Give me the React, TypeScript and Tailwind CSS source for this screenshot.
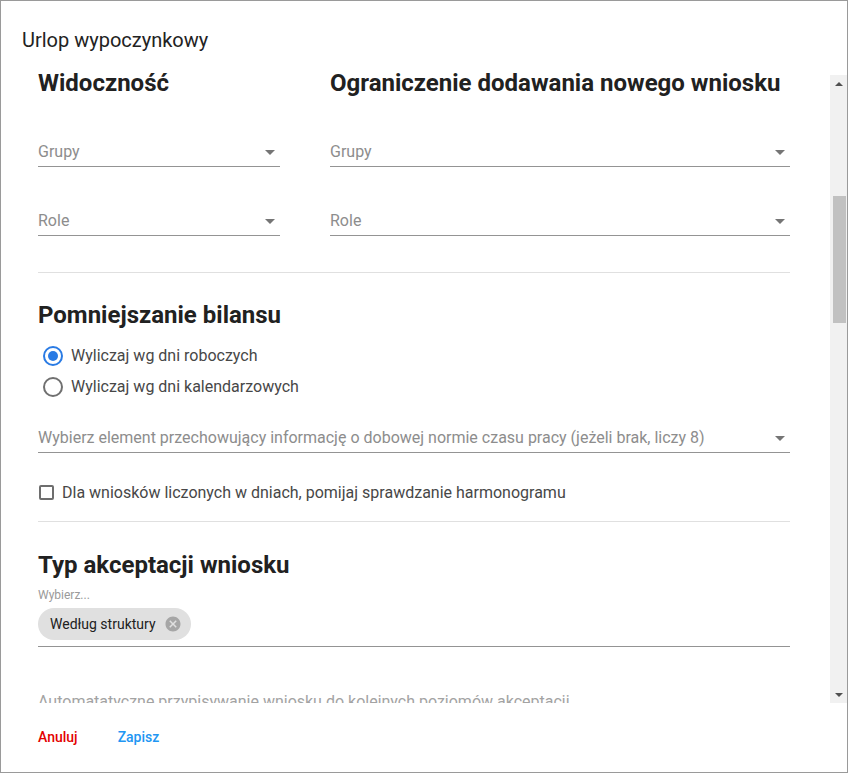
import type { ReactNode } from 'react';

const ArrowDrop = () => (
  <svg viewBox="0 0 24 24" className="w-6 h-6 -mr-[2px] shrink-0 fill-[#757575]">
    <path d="M7 10l5 5 5-5z" />
  </svg>
);

function SelectField({ placeholder, className = '' }: { placeholder: string; className?: string }) {
  return (
    <div className={`flex items-center h-[19px] box-content pb-[5px] border-b border-[#949494] ${className}`}>
      <span className="flex-1 text-[16px] leading-[19px] text-[#8d8d8d] truncate">{placeholder}</span>
      <ArrowDrop />
    </div>
  );
}

function Heading({ children, className = '' }: { children: ReactNode; className?: string }) {
  return <h2 className={`text-[24px] leading-[28px] font-bold text-[#212121] ${className}`}>{children}</h2>;
}

function Radio({ checked, label }: { checked?: boolean; label: string }) {
  return (
    <label className="flex items-center h-[31px]">
      <svg viewBox="0 0 24 24" className="w-6 h-6 ml-[3px]">
        <circle cx="12" cy="12" r="9" fill="none" strokeWidth="2" stroke={checked ? '#2a7be4' : '#707070'} />
        {checked && <circle cx="12" cy="12" r="5" fill="#2a7be4" />}
      </svg>
      <span className="ml-[6px] text-[16px] leading-[19px] text-[#474747]">{label}</span>
    </label>
  );
}

function Scrollbar() {
  return (
    <div className="w-[17px] bg-[#f1f1f1] flex flex-col items-center">
      <div className="h-[17px] flex items-center justify-center">
        <div className="w-0 h-0 border-x-[4px] border-x-transparent border-b-[4px] border-b-[#505050]" />
      </div>
      <div className="h-[104px]" />
      <div className="w-[13px] h-[127px] bg-[#c1c1c1] ml-[1px]" />
      <div className="flex-1" />
      <div className="h-[17px] flex items-center justify-center">
        <div className="w-0 h-0 border-x-[4px] border-x-transparent border-t-[4px] border-t-[#505050]" />
      </div>
    </div>
  );
}

export default function App() {
  return (
    <div className="w-[848px] h-[773px] bg-white border border-[#9a9a9a] flex flex-col font-['Roboto',sans-serif]">
      <div className="h-[74px] shrink-0 pl-[21px] pt-[27px]">
        <h1 className="text-[20px] leading-[24px] text-[#222]">Urlop wypoczynkowy</h1>
      </div>

      <div className="h-[628px] shrink-0 flex">
        <div className="flex-1 pl-[37px] pr-[40px] [clip-path:inset(-12px_0_0_0)]">
          <div className="-mt-[6px]">
            <div className="grid grid-cols-[242px_460px] gap-x-[50px]">
              <div>
                <Heading>Widoczność</Heading>
                <SelectField placeholder="Grupy" className="mt-[45px]" />
                <SelectField placeholder="Role" className="mt-[44px]" />
              </div>
              <div>
                <Heading>Ograniczenie dodawania nowego wniosku</Heading>
                <SelectField placeholder="Grupy" className="mt-[45px]" />
                <SelectField placeholder="Role" className="mt-[44px]" />
              </div>
            </div>

            <div className="mt-[36px] border-t border-[#e0e0e0]" />

            <Heading className="mt-[28px]">Pomniejszanie bilansu</Heading>
            <div className="mt-[11px]">
              <Radio checked label="Wyliczaj wg dni roboczych" />
              <Radio label="Wyliczaj wg dni kalendarzowych" />
            </div>

            <SelectField
              className="mt-[26px]"
              placeholder="Wybierz element przechowujący informację o dobowej normie czasu pracy (jeżeli brak, liczy 8)"
            />

            <label className="mt-[27px] h-[24px] flex items-center">
              <span className="ml-[1px] w-[15px] h-[15px] border-2 border-[#6e6e6e] rounded-[2px] shrink-0" />
              <span className="ml-[8px] text-[16px] leading-[19px] text-[#474747]">
                Dla wniosków liczonych w dniach, pomijaj sprawdzanie harmonogramu
              </span>
            </label>

            <div className="mt-[17px] border-t border-[#e0e0e0]" />

            <Heading className="mt-[29px]">Typ akceptacji wniosku</Heading>
            <div className="mt-[9px] text-[12px] leading-[14px] text-[#9a9a9a]">Wybierz...</div>
            <div className="mt-[6px] pb-[6px] border-b border-[#949494]">
              <span className="inline-flex items-center h-[32px] rounded-full bg-[#e0e0e0] pl-[12px] pr-[9px]">
                <span className="text-[14px] leading-[16px] text-[#212121]">Według struktury</span>
                <svg viewBox="0 0 24 24" className="ml-[8px] w-[18px] h-[18px] fill-[#a6a6a6]">
                  <path d="M12 2C6.47 2 2 6.47 2 12s4.47 10 10 10 10-4.47 10-10S17.53 2 12 2zm5 13.59L15.59 17 12 13.41 8.41 17 7 15.59 10.59 12 7 8.41 8.41 7 12 10.59 15.59 7 17 8.41 13.41 12 17 15.59z" />
                </svg>
              </span>
            </div>

            <div className="mt-[45px] text-[16px] leading-[19px] text-[#a3a3a3]">
              Automatatyczne przypisywanie wniosku do kolejnych poziomów akceptacji
            </div>
          </div>
        </div>
        <Scrollbar />
      </div>

      <div className="flex-1 flex items-start pl-[37px] pt-[26px] gap-[40px] text-[14px] leading-[16px] font-medium">
        <button className="text-[#e30000]">Anuluj</button>
        <button className="text-[#2196f3]">Zapisz</button>
      </div>
    </div>
  );
}
